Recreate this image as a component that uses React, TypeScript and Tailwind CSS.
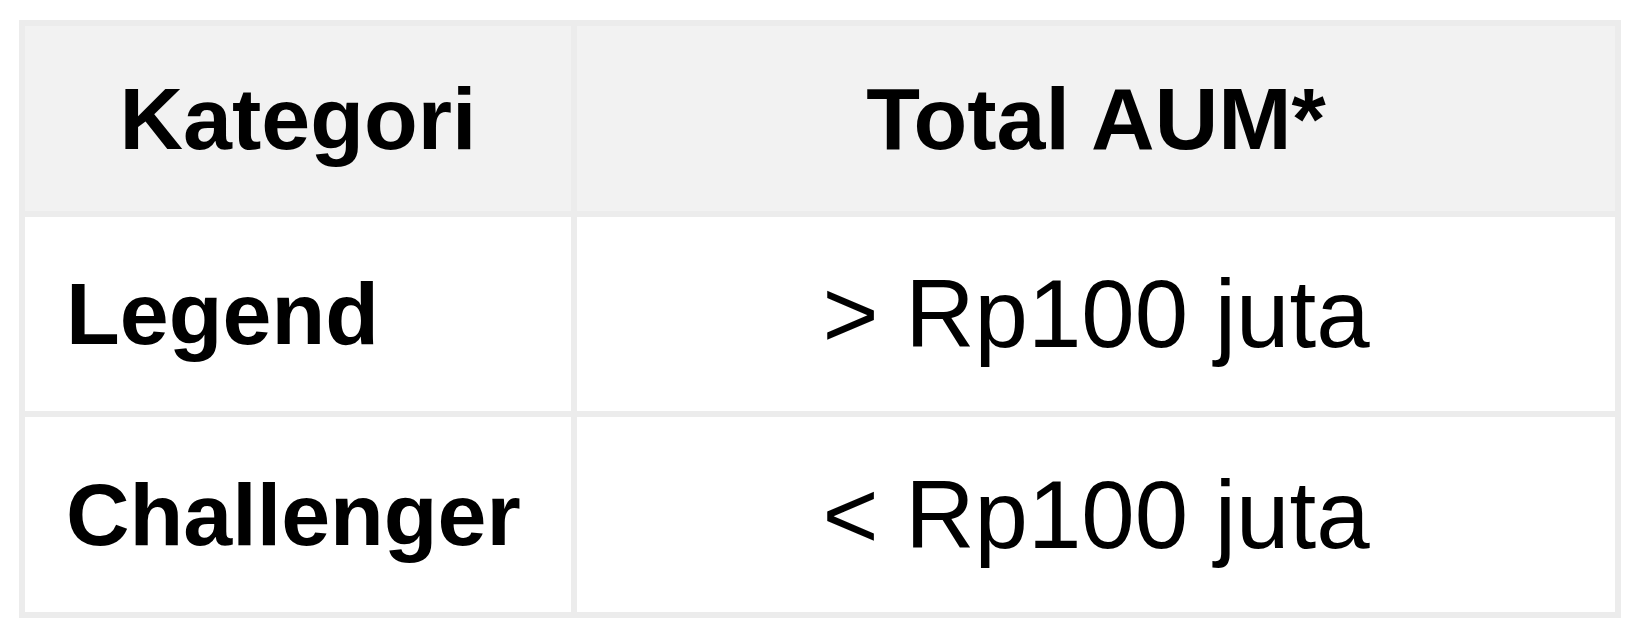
import React from 'react';

const rows = [
  { name: 'Legend', aum: '> Rp100 juta' },
  { name: 'Challenger', aum: '< Rp100 juta' },
];

export default function App() {
  return (
    <div className="min-h-screen bg-white pl-[19px] pt-[20px] font-['Liberation_Sans',Arial,sans-serif] text-black">
      <div className="grid w-[1602px] grid-cols-[546px_1038px] grid-rows-[185px_194px_195px] gap-[6px] bg-[#ececec] p-[6px]">
        <div className="flex items-center justify-center bg-[#f2f2f2] text-[88px] font-bold">Kategori</div>
        <div className="flex items-center justify-center bg-[#f2f2f2] text-[88px] font-bold">Total AUM*</div>
        {rows.map((row) => (
          <React.Fragment key={row.name}>
            <div className="flex items-center bg-white pl-[41px] text-[88px] font-bold">{row.name}</div>
            <div className="flex items-center justify-center bg-white text-[96px]">{row.aum}</div>
          </React.Fragment>
        ))}
      </div>
    </div>
  );
}
